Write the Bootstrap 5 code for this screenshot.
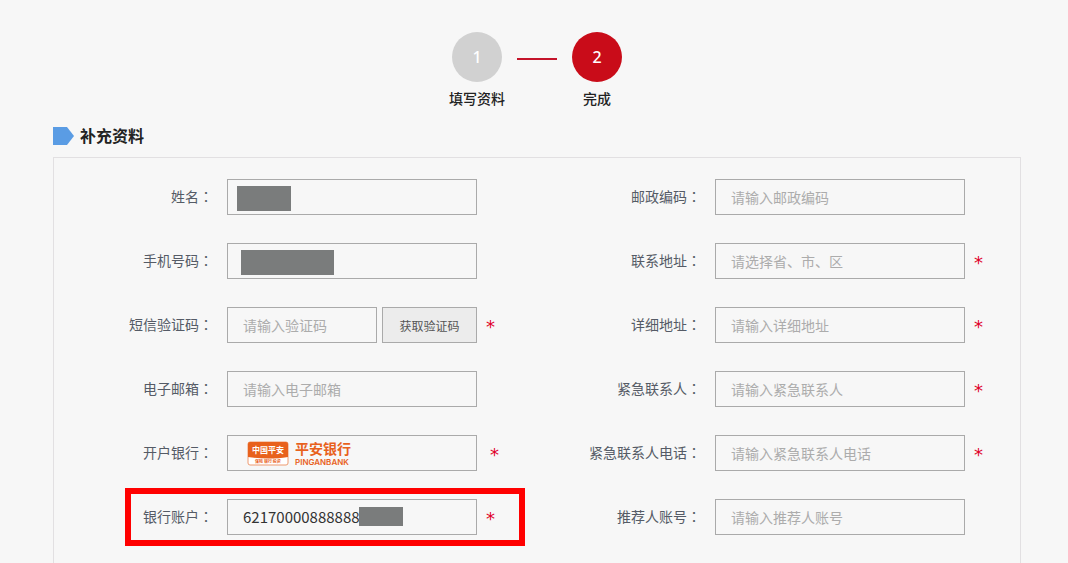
<!DOCTYPE html>
<html lang="zh-CN">
<head>
<meta charset="utf-8">
<meta name="viewport" content="width=device-width, initial-scale=1">
<title>补充资料</title>
<link href="https://cdn.jsdelivr.net/npm/bootstrap@5.3.0/dist/css/bootstrap.min.css" rel="stylesheet">
<style>
body{background:#f7f7f7;color:#222;font:14px/20px "Noto Sans CJK SC",sans-serif}
.page{padding:32px 47px 0 53px}
.steps{gap:12px}
.step-item{width:56px}
.step-dot{width:50px;height:50px;background:#d1d1d1;color:#fff;font:500 16px/50px "Noto Sans",sans-serif}
.step-item.active .step-dot{background:#c90c19}
.step-name{margin-top:6px;font-weight:500}
.step-line{width:40px;height:2px;margin-top:26px;background:#c4142a}
.section-title{font-size:16px;line-height:24px;margin:16px 0 9px;gap:6px;color:#222}
.section-title span{padding-bottom:2px;line-height:22px}
.panel{border:1px solid #e2e0e2;border-bottom:0;padding:21px 0 28px}
.form-cols{display:grid;grid-template-columns:1fr 1fr;column-gap:10px}
.form-side{display:flex;flex-direction:column;gap:28px}
.field-label{width:173px;padding:0 14px 2px 0;color:#555b66;text-align:right;flex:none}
.colon{font-family:"Noto Sans CJK TC",sans-serif}
.field-box{width:250px;flex:none}
.form-control,.btn-code,.bank-picker{height:36px;border:1px solid #aaa;border-radius:0;background:transparent;font-size:14px;line-height:20px}
.form-control{padding:6px 15px;color:#222}
.form-control:focus{background:transparent}
.form-control::placeholder{color:#acacac;opacity:1}
.form-control.account{font-size:15px;color:#333;padding-bottom:8px}
.code-box{gap:5px}
.btn-code{width:95px;flex:none;padding:1px 0 0;background:#ececec;color:#555;font-size:12px}
.bank-picker{padding:0 0 0 19px;display:flex;align-items:center;width:100%}
.required-mark{width:9px;margin-left:9px;color:#e0002a;font:18px/20px "DejaVu Sans",sans-serif;padding-top:3px}
.bank-row .required-mark{margin-left:13px}
.redaction{position:absolute;background:#7a7c7c}
.redact-name{left:10px;top:7px;width:54px;height:25px}
.redact-phone{left:14px;top:7px;width:93px;height:25px}
.redact-account{left:132px;top:8px;width:44px;height:19px}
.highlight{position:absolute;inset:-11px 7px -11px 71px;border:6px solid #f00;pointer-events:none}
</style>
</head>
<body>
<main class="page">
  <div class="steps d-flex justify-content-center">
    <div class="step-item d-flex flex-column align-items-center">
      <div class="step-dot rounded-circle text-center">1</div>
      <div class="step-name text-nowrap">填写资料</div>
    </div>
    <div class="step-line"></div>
    <div class="step-item active d-flex flex-column align-items-center">
      <div class="step-dot rounded-circle text-center">2</div>
      <div class="step-name text-nowrap">完成</div>
    </div>
  </div>

  <h1 class="section-title d-flex align-items-center fw-bold">
    <svg width="21" height="18" viewBox="0 0 21 18" aria-hidden="true"><path d="M0 0H14L21 9L14 18H0Z" fill="#5a9ce4"/></svg>
    <span>补充资料</span>
  </h1>

  <form class="panel">
    <div class="form-cols">
      <div class="form-side">
        <div class="d-flex align-items-center">
          <label class="field-label" for="name">姓名<span class="colon" lang="zh-TW">：</span></label>
          <div class="field-box position-relative"><input class="form-control" id="name" type="text"><span class="redaction redact-name"></span></div>
        </div>
        <div class="d-flex align-items-center">
          <label class="field-label" for="phone">手机号码<span class="colon" lang="zh-TW">：</span></label>
          <div class="field-box position-relative"><input class="form-control" id="phone" type="tel"><span class="redaction redact-phone"></span></div>
        </div>
        <div class="d-flex align-items-center">
          <label class="field-label" for="code">短信验证码<span class="colon" lang="zh-TW">：</span></label>
          <div class="field-box code-box d-flex"><input class="form-control" id="code" type="text" placeholder="请输入验证码"><button class="btn btn-code" type="button">获取验证码</button></div>
          <span class="required-mark">*</span>
        </div>
        <div class="d-flex align-items-center">
          <label class="field-label" for="email">电子邮箱<span class="colon" lang="zh-TW">：</span></label>
          <div class="field-box"><input class="form-control" id="email" type="email" placeholder="请输入电子邮箱"></div>
        </div>
        <div class="bank-row d-flex align-items-center">
          <label class="field-label" for="bank">开户银行<span class="colon" lang="zh-TW">：</span></label>
          <div class="field-box">
            <button class="bank-picker" id="bank" type="button">
              <svg width="108" height="28" viewBox="0 0 108 28" font-family="Noto Sans CJK SC, sans-serif" font-weight="700" fill="#e8611c">
                <rect x="1" y="3" width="40" height="23" rx="2" fill="#fff" stroke="#ee9a70"/>
                <path d="M1 5Q1 3 3 3H39Q41 3 41 5V18C28 20 14 20 1 18Z"/>
                <text x="5" y="14" font-size="8" fill="#fff">中国平安</text>
                <text x="8" y="24" font-size="4">保险 银行 投资</text>
                <text x="48" y="15" font-size="14">平安银行</text>
                <text x="48" y="26" font-size="8" font-weight="600" font-family="Inter, sans-serif">PINGANBANK</text>
              </svg>
            </button>
          </div>
          <span class="required-mark">*</span>
        </div>
        <div class="d-flex align-items-center position-relative">
          <label class="field-label" for="account">银行账户<span class="colon" lang="zh-TW">：</span></label>
          <div class="field-box position-relative"><input class="form-control account" id="account" type="text" value="62170000888888"><span class="redaction redact-account"></span></div>
          <span class="required-mark">*</span>
          <span class="highlight"></span>
        </div>
      </div>

      <div class="form-side">
        <div class="d-flex align-items-center">
          <label class="field-label" for="zip">邮政编码<span class="colon" lang="zh-TW">：</span></label>
          <div class="field-box"><input class="form-control" id="zip" type="text" placeholder="请输入邮政编码"></div>
        </div>
        <div class="d-flex align-items-center">
          <label class="field-label" for="region">联系地址<span class="colon" lang="zh-TW">：</span></label>
          <div class="field-box"><input class="form-control" id="region" type="text" placeholder="请选择省、市、区"></div>
          <span class="required-mark">*</span>
        </div>
        <div class="d-flex align-items-center">
          <label class="field-label" for="address">详细地址<span class="colon" lang="zh-TW">：</span></label>
          <div class="field-box"><input class="form-control" id="address" type="text" placeholder="请输入详细地址"></div>
          <span class="required-mark">*</span>
        </div>
        <div class="d-flex align-items-center">
          <label class="field-label" for="contact">紧急联系人<span class="colon" lang="zh-TW">：</span></label>
          <div class="field-box"><input class="form-control" id="contact" type="text" placeholder="请输入紧急联系人"></div>
          <span class="required-mark">*</span>
        </div>
        <div class="d-flex align-items-center">
          <label class="field-label" for="contact-phone">紧急联系人电话<span class="colon" lang="zh-TW">：</span></label>
          <div class="field-box"><input class="form-control" id="contact-phone" type="tel" placeholder="请输入紧急联系人电话"></div>
          <span class="required-mark">*</span>
        </div>
        <div class="d-flex align-items-center">
          <label class="field-label" for="referrer">推荐人账号<span class="colon" lang="zh-TW">：</span></label>
          <div class="field-box"><input class="form-control" id="referrer" type="text" placeholder="请输入推荐人账号"></div>
        </div>
      </div>
    </div>
  </form>
</main>
<script src="https://cdn.jsdelivr.net/npm/bootstrap@5.3.0/dist/js/bootstrap.bundle.min.js"></script>
</body>
</html>
